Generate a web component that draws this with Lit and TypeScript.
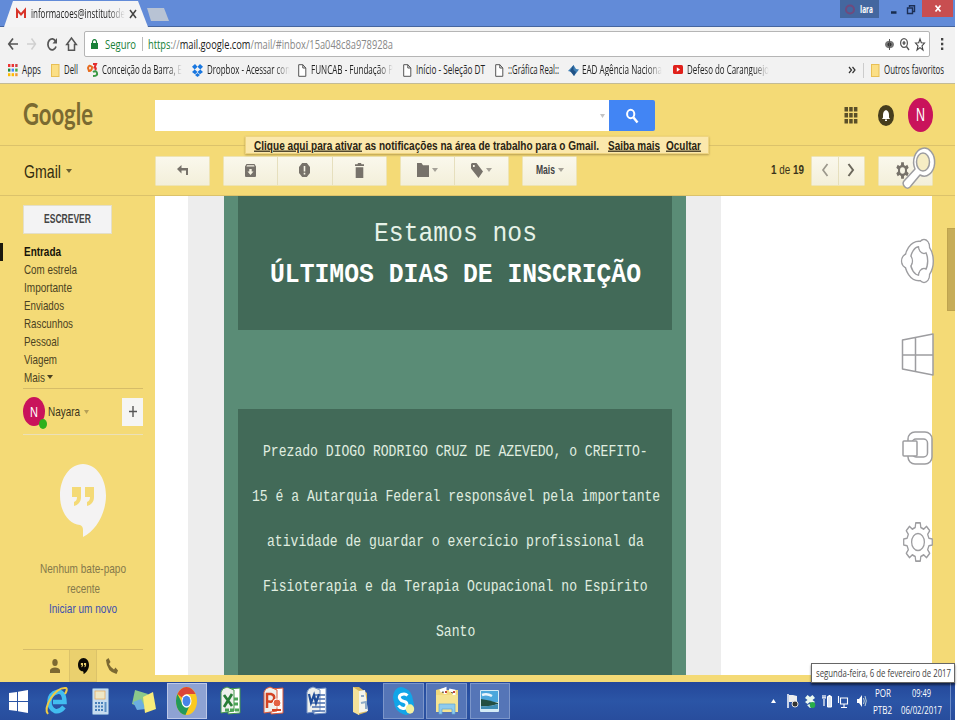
import { LitElement, html, svg, css } from "lit";
import { customElement } from "lit/decorators.js";

// Text condensed to a fixed width, cap-height centred in its box.
const t = (text: unknown, w: number, size: number, cls = "") => html`<svg class="t ${cls}" width=${w} height=${size} font-size=${size}><text x="0" y=${size * 0.86} textLength=${w} lengthAdjust="spacingAndGlyphs">${text}</text></svg>`;
const ic = (w: number, h: number, body: unknown, vb = `0 0 ${w} ${h}`, cls = "") => html`<svg class="ic ${cls}" width=${w} height=${h} viewBox=${vb} preserveAspectRatio="none">${body}</svg>`;

const caret = (c: string, w = 6) => ic(w, 4, svg`<path d="M0 0H10L5 6Z" fill=${c}/>`, "0 0 10 6");
const folder = svg`<rect x=".5" y=".5" width="7.5" height="12" fill="#fbdf86" stroke="#e8bf55"/>`;
const page = svg`<path d="M.7 .7H4.8L7.8 4V12.3H.7ZM4.8 .7V4H7.8" fill="#fff" stroke="#555"/>`;
const bubble = svg`<path fill-rule="evenodd" d="M23 0C10 0 0 14 0 31.500C0 48 9 60 20 61Q23 62 23 66V73C37 66 46 48 46 31.500C46 14 36 0 23 0ZM12 23H21V33C21 38 18 41 14 42V38C16 37 17 36 17 33H12ZM25 23H34V33C34 38 31 41 27 42V38C29 37 30 36 30 33H25Z"/>`;
const gearPath = (n: number, R: number, r: number) => {
  const p: string[] = [];
  for (let i = 0; i < n; i++) {
    [[-0.32, r], [-0.2, R], [0.2, R], [0.32, r]].forEach(([o, q]) => {
      const a = ((i + o) * 2 * Math.PI) / n - Math.PI / 2;
      p.push(`${(Math.cos(a) * q).toFixed(2)} ${(Math.sin(a) * q).toFixed(2)}`);
    });
  }
  return "M" + p.join("L") + "Z";
};

@customElement("app-root")
export class AppRoot extends LitElement {
  static styles = css`
    :host { display: block; width: 960px; height: 720px; background: #fff; overflow: hidden; font-family: "Liberation Sans", Arial, sans-serif; }
    * { box-sizing: border-box; }
    svg { display: block; flex: none; overflow: visible; }
    .desk { width: 955px; height: 720px; position: relative; display: flex; flex-direction: column; }
    .ui { font-family: "Open Sans", "Noto Sans", sans-serif; fill: #222; }
    .row { display: flex; align-items: center; }
    .c { display: flex; align-items: center; justify-content: center; }
    .b { font-weight: 700; }
    .tabs { height: 27px; flex: none; background: #628bd8; border-bottom: 1px solid #45659f; display: grid; grid-template-columns: 144px 692px 39px 43px 31px; align-items: start; padding-left: 4px; }
    .tab { height: 27px; background: #f4f4f5; clip-path: polygon(0 100%, 9px 1px, 134px 1px, 144px 100%); padding-left: 12px; gap: 5px; }
    .new { width: 22px; height: 13px; margin: 8px 0 0 -1px; background: #b8c3d4; clip-path: polygon(0 0, 17px 0, 22px 13px, 4px 13px); }
    .user { height: 18px; background: #44679f; gap: 5px; padding-left: 5px; }
    .user .ui, .x .ui { fill: #fff; }
    .wc { height: 18px; gap: 10px; padding-left: 11px; }
    .x { height: 17px; background: #c84e50; }
    .tools { height: 30px; flex: none; background: #f2f2f2; display: grid; grid-template-columns: 19px 20px 19px 18px 846px 1fr; padding-left: 8px; padding-top: 4px; align-items: center; }
    .omni { height: 26px; background: #fff; border: 1px solid #b5b5b5; border-radius: 2px; padding-left: 6px; padding-right: 4px; }
    .omni .sec { margin-left: 7px; }
    .omni .url { margin-left: 5px; }
    .bar { width: 1px; height: 14px; background: #bbb; margin-left: 6px; }
    .sp { flex: 1; }
    .g { gap: 6px; }
    .green { fill: #188038; }
    .bm { height: 27px; flex: none; background: #f2f2f2; border-bottom: 1px solid #c3bb96; display: grid; grid-template-columns: 43px 36px 105px 106px 105px 92px 73px 105px 176px 14px 8px 1fr; padding-left: 8px; align-items: center; }
    .bm .row { gap: 4px; }
    .fade { -webkit-mask-image: linear-gradient(90deg, #000 82%, transparent); mask-image: linear-gradient(90deg, #000 82%, transparent); }
    .gm { height: 598px; flex: none; background: #f4da76; }
    .head { height: 62px; display: grid; grid-template-columns: 155px 454px 46px 189px 34px 30px 1fr; align-items: start; border-bottom: 1px solid #dbc26b; }
    .logo { padding-left: 23px; padding-top: 14px; }
    .logo .t { font-family: "Lato", sans-serif; font-weight: 700; fill: #7a6a31; }
    .search { height: 31px; margin-top: 16px; background: #fff; padding-right: 4px; justify-content: flex-end; }
    .sb { height: 31px; margin-top: 16px; background: #4285f4; border-radius: 0 2px 2px 0; }
    .h { height: 31px; margin-top: 16px; }
    .av { border-radius: 50%; background: #c9135b; fill: #fff; }
    .big { width: 25px; height: 34px; margin: 14px 0 0 0; }
    .bell { width: 16px; height: 21px; border-radius: 50%; background: #463d1d; }
    .tb { height: 50px; display: flex; align-items: flex-start; padding-top: 10px; border-bottom: 1px solid #dbc26b; }
    .gml { width: 155px; height: 30px; padding-left: 24px; gap: 5px; fill: #332c10; }
    .btns { height: 30px; display: flex; background: linear-gradient(#faf8ec, #f3efda); border: 1px solid #eee4b4; border-radius: 1px; margin-right: 13px; }
    .btns > div { flex: 1; gap: 3px; padding-bottom: 2px; }
    .btns > div + div { border-left: 1px solid #e6dfbd; }
    .btns .b { fill: #444; }
    .w1 { width: 55px; } .w3 { width: 164px; } .w2 { width: 109px; } .wn { width: 54px; }
    .cnt { width: 221px; height: 27px; justify-content: flex-end; padding-right: 7px; fill: #3b341b; }
    .main { height: 486px; display: flex; }
    .side { width: 155px; height: 486px; padding-left: 23px; fill: #4b4222; display: flex; flex-direction: column; }
    .write { width: 89px; height: 29px; margin-top: 9px; background: #f3f3f4; border: 1px solid #e4dfc9; fill: #444; flex: none; padding-bottom: 2px; }
    .labels { margin-top: 9px; padding-left: 1px; flex: none; height: 145px; }
    .labels .row { height: 17.9px; gap: 2px; }
    .sel { margin-left: -24px; padding-left: 21px; border-left: 3px solid #1b180d; fill: #17140a; }
    .hr { width: 120px; border-top: 1px solid #d6bc68; flex: none; }
    .me { width: 120px; height: 45px; flex: none; }
    .me .t { margin-left: 3px; fill: #3b341b; } .me .ic { margin-left: 4px; }
    .sm { width: 22px; height: 29px; position: relative; }
    .me .sm .t { margin: 0; fill: #fff; }
    .dot { position: absolute; right: -2px; bottom: -3px; width: 8px; height: 10px; border-radius: 50%; background: #2fb01d; }
    .plus { width: 21px; height: 28px; margin-left: auto; background: #f5f5f3; fill: #555; }
    .me .plus .ic { margin: 0; }
    .hr.lt { border-color: #ebe0b8; }
    .chat { width: 120px; margin-top: 29px; height: 185px; display: flex; flex-direction: column; align-items: center; fill: #85794b; flex: none; }
    .chat .ic { fill: #f4f3f3; margin-bottom: 25px; }
    .chat .t { margin-bottom: 7px; }
    .chat .lk { fill: #3c50b0; }
    .foot { display: grid; grid-template-columns: 46px 28px 46px; width: 120px; height: 32px; fill: #7c6932; }
    .foot > :nth-child(1) { padding-left: 18px; } .foot > :nth-child(3) { padding-right: 16px; }
    .foot > :nth-child(2) { background: #ead06e; border: 1px solid #dcc36a; border-top: 0; fill: #0a0904; }
    .mail { width: 777px; height: 478.500px; background: #fff; display: flex; padding-left: 33px; }
    .gray { width: 533px; background: #ededed; padding: 0 35px 0 36px; }
    .lt-g { height: 100%; background: #5a8c76; padding: 0 14px 0 13.500px; }
    .dk { background: #426a58; fill: #fff; font-family: "Liberation Mono", monospace; display: flex; flex-direction: column; align-items: center; padding-left: 2px; }
    .d1 { height: 134px; padding-top: 20px; gap: 12.500px; }
    .thin { fill: #e6f2e8; }
    .d2 { height: 266px; margin-top: 79px; padding-top: 33px; gap: 28.400px; fill: #e0eee0; }
    .notice { position: absolute; left: 245px; top: 136px; width: 464px; height: 18px; background: #fbe8ac; border: 1px solid #eed480; box-shadow: 0 1px 2px #b59c50; padding-left: 8px; fill: #2a2413; }
    .notice .t:nth-child(2) { margin-left: 3px; } .notice .t:nth-child(3) { margin-left: 9px; } .notice .t:nth-child(4) { margin-left: 6px; }
    .u { text-decoration: underline; }
    .thumb { position: absolute; right: 0; top: 228px; width: 8px; height: 83px; background: #c7ad58; border: 1px solid #bea34e; border-right: 0; }
    .charms { position: absolute; left: 901px; top: 147px; width: 33px; display: flex; flex-direction: column; align-items: center; }
    .charms > :nth-child(2), .charms > :nth-child(3) { margin-top: 50px; }
    .charms > :nth-child(4) { margin-top: 55px; } .charms > :nth-child(5) { margin-top: 57px; }
    .tip { position: absolute; left: 811px; top: 663px; width: 144px; height: 20px; background: #fff; border: 1px solid #666; box-shadow: 0 2px 2px #0008; }
    .tip .ui { fill: #444; }
    .task { height: 38px; flex: none; background: linear-gradient(#24479a, #2b55a6 50%, #284d9d); display: flex; align-items: flex-start; }
    .start { width: 36.700px; height: 38px; }
    .cell { width: 40.500px; height: 36px; margin: 1px 2.800px 0 0; border: 1px solid transparent; }
    .run { background: #5575b7; border-color: #7c96ca; }
    .act { background: #8ea2d3; border-color: #bdc8e8; }
    .tray { margin-left: auto; width: 194px; height: 38px; display: grid; grid-template-columns: 13px 17px 17px 17px 16px 21px 21px 57px 1fr; align-items: center; padding-left: 10px; }
    .tray .ui { fill: #fff; }
    .st { display: flex; flex-direction: column; gap: 5px; align-items: center; }
    .show { height: 38px; width: 1px; background: #6d8cc8; }
  `;

  bookmark(icon: unknown, w: number, h: number, text: string, tw: number, fade = false, vb?: string) {
    return html`<div class="row">${ic(w, h, icon, vb)}${t(text, tw, 11.8, "ui" + (fade ? " fade" : ""))}</div>`;
  }

  chrome() {
    const grid = svg`${["#e33", "#e33", "#c44", "#284", "#48f", "#4a4", "#fb0", "#fb0", "#e93"].map((c, i) => svg`<rect x=${(i % 3) * 3.6} y=${Math.floor(i / 3) * 4.6} width="2.4" height="3" fill=${c}/>`)}`;
    return html`
      <div class="tabs">
        <div class="tab row">${ic(10, 9, svg`<path d="M1 9V1L5 5.500L9 1V9" fill="none" stroke="#d8352b" stroke-width="2"/>`)}${t("informacoes@institutode", 94, 11.8, "ui fade")}${ic(6, 8, svg`<path d="M0 0L6 8M6 0L0 8" stroke="#444" stroke-width="1.500"/>`)}</div>
        <div class="new"></div>
        <div class="user row">${ic(10, 11, svg`<circle cx="5" cy="5.500" r="4" fill="none" stroke="#704a7d" stroke-width="2"/>`)}${t("Iara", 13, 11, "ui b")}</div>
        <div class="wc row">${ic(7, 12, svg`<path d="M1 9.500H6.500" stroke="#182c4e" stroke-width="2.500"/>`)}${ic(8, 9, svg`<path d="M2.500 2V.7H7.500V6.500H6M.5 3H5.500V8.500H.5Z" fill="none" stroke="#1c2f55" stroke-width="1.400"/>`)}</div>
        <div class="x c">${ic(6, 7, svg`<path d="M.5 .5L5.500 6.500M5.500 .5L.5 6.500" stroke="#fff" stroke-width="1.700"/>`)}</div>
      </div>
      <div class="tools">
        ${ic(10, 12, svg`<path d="M10 6H1M5 .5L.8 6L5 11.500" fill="none" stroke="#555" stroke-width="1.700"/>`)}
        ${ic(9, 12, svg`<path d="M0 6H8M4.500 .5L8.500 6L4.500 11.500" fill="none" stroke="#d0d0d0" stroke-width="1.500"/>`)}
        ${ic(10, 13, svg`<path d="M8.700 3.500A4.200 5.500 0 1 0 9 8.500" fill="none" stroke="#555" stroke-width="1.700"/><path d="M10 0V5.500H5.500Z" fill="#555"/>`)}
        ${ic(11, 14, svg`<path d="M5.500 1L.7 7.500H2.500V13.200H8.500V7.500H10.300Z" fill="none" stroke="#555" stroke-width="1.500"/>`)}
        <div class="omni row">
          ${ic(7, 10, svg`<path d="M0 4H7V10H0Z" fill="#188038"/><path d="M1.500 4.500V3Q1.500 .7 3.500 .7T5.500 3V4.500" fill="none" stroke="#188038" stroke-width="1.200"/>`)}
          ${t("Seguro", 31, 13, "ui green sec")}<div class="bar"></div>
          ${t(svg`<tspan fill="#188038">https</tspan><tspan fill="#888">://</tspan><tspan fill="#222">mail.google.com</tspan><tspan fill="#888">/mail/#inbox/15a048c8a978928a</tspan>`, 245, 13, "ui url")}
          <div class="sp"></div>
          <div class="row g">
            ${ic(9, 11, svg`<ellipse cx="4.500" cy="5.500" rx="4.500" ry="3.800" fill="#777"/><circle cx="4.500" cy="5.500" r="2" fill="#333"/><path d="M4.500 0V11" stroke="#555"/>`)}
            ${ic(9, 12, svg`<ellipse cx="4" cy="5" rx="3.400" ry="4.400" fill="none" stroke="#555" stroke-width="1.200"/><path d="M2.500 5H5.500M4 3V7M6.500 8.500L9 12" stroke="#555" stroke-width="1.300"/>`)}
            ${ic(10, 13, svg`<path d="M5 1L6.300 4.800L9.500 5L7 7.800L8 12L5 9.600L2 12L3 7.800L.5 5L3.700 4.800Z" fill="none" stroke="#444" stroke-width="1.100"/>`)}
          </div>
        </div>
        <div class="c">${ic(3, 12, svg`<path d="M0 0H2.300V2.500H0ZM0 4.700H2.300V7.200H0ZM0 9.500H2.300V12H0Z" fill="#444"/>`)}</div>
      </div>
      <div class="bm">
        ${this.bookmark(grid, 10, 12, "Apps", 19, false)}
        ${this.bookmark(folder, 9, 13, "Dell", 14)}
        ${this.bookmark(svg`<path d="M1 5Q2 1 5 4Q5 8 2 8Z" fill="none" stroke="#e66b1e" stroke-width="2"/><path d="M6 1H9L7.500 4.500Q10 5 8 7" fill="none" stroke="#e32c2c" stroke-width="2"/><path d="M6 9Q9 7 10 10T6 13" fill="none" stroke="#3a9a45" stroke-width="2"/>`, 11, 14, "Conceição da Barra, E", 80, true)}
        ${this.bookmark(svg`<path d="M3 0L5.500 2.700L2.700 5.400L0 2.800ZM8 0L11 2.800L8.300 5.400L5.500 2.700ZM0 8L2.700 5.400L5.500 8L3 10.200ZM11 8L8.300 5.400L5.500 8L8 10.200ZM3 11L5.500 9L8 11L5.500 13Z" fill="#1977e0"/>`, 11, 13, "Dropbox - Acessar con", 83, true)}
        ${this.bookmark(page, 9, 13, "FUNCAB - Fundação P", 82, true)}
        ${this.bookmark(page, 9, 13, "Início - Seleção DT", 69)}
        ${this.bookmark(page, 9, 13, "::Gráfica Real::", 51)}
        ${this.bookmark(svg`<path d="M0 7L5.500 1L8 5L11 5.500L6 12L4 8Z" fill="#3e7fb5"/><path d="M5.500 1V6L8 8L6 12L2 7Z" fill="#205286"/>`, 10, 12, "EAD Agência Naciona", 80, true)}
        ${this.bookmark(svg`<rect y="1" width="10" height="9" rx="1.500" fill="#e0201b"/><path d="M3.800 3.200V7.800L7 5.500Z" fill="#fff"/>`, 10, 11, "Defeso do Caranguejo", 82, true)}
        ${ic(6, 6, svg`<path d="M0 0L2.500 3L0 6M3.500 0L6 3L3.500 6" fill="none" stroke="#333" stroke-width="1.200"/>`)}
        ${ic(1, 15, svg`<path d="M.5 0V15" stroke="#ccc"/>`)}
        ${this.bookmark(folder, 9, 13, "Outros favoritos", 60)}
      </div>`;
  }

  side() {
    const L: [string, number][] = [["Com estrela", 53], ["Importante", 48], ["Enviados", 40], ["Rascunhos", 49], ["Pessoal", 35], ["Viagem", 33]];
    return html`<div class="side">
      <div class="write c">${t("ESCREVER", 47, 12, "b")}</div>
      <div class="labels">
        <div class="row sel">${t("Entrada", 37, 13, "b")}</div>
        ${L.map(([s, w]) => html`<div class="row">${t(s, w, 13)}</div>`)}
        <div class="row">${t("Mais", 21, 13)}${caret("#4b4222", 6)}</div>
      </div>
      <div class="hr"></div>
      <div class="me row"><div class="sm av c">${t("N", 8, 15)}<div class="dot"></div></div>${t("Nayara", 32, 13)}${caret("#b59f58", 5)}
        <div class="plus c">${ic(8, 11, svg`<path d="M0 5.500H8M4 0V11" stroke="#555" stroke-width="1.400"/>`)}</div></div>
      <div class="hr lt"></div>
      <div class="chat">${ic(46, 73, bubble)}<div>${t("Nenhum bate-papo", 86, 13)}</div>${t("recente", 33, 13)}${t("Iniciar um novo", 68, 13, "lk")}</div>
      <div class="hr"></div>
      <div class="foot"><div class="c">${ic(10, 14, svg`<ellipse cx="5" cy="3.500" rx="2.700" ry="3.500"/><path d="M0 14V11Q1 8.500 5 8.500T10 11V14Z"/>`)}</div>
        <div class="c">${ic(11, 16, bubble, "0 0 46 73")}</div>
        <div class="c">${ic(12, 16, svg`<path d="M0 2L2.500 0L4.500 4L3 6Q5 10 8 11.500L9.500 9.500L12 12.500L10.500 16Q1 14 0 2Z"/>`)}</div></div>
    </div>`;
  }

  gmail() {
    const G = "#77726a";
    const mono = (s: string) => t(s, s.length * 7.85, 16.5);
    return html`<div class="gm">
      <div class="head">
        <div class="logo">${t("Google", 70, 31)}</div>
        <div class="search row">${caret("#c4c4c4", 5)}</div>
        <div class="sb c">${ic(12, 14, svg`<ellipse cx="4.700" cy="5" rx="3.600" ry="4.200" fill="none" stroke="#fff" stroke-width="2"/><path d="M7.500 8.500L11.500 13.500" stroke="#fff" stroke-width="2.400"/>`)}</div>
        <div></div>
        <div class="h row">${ic(14, 17, svg`${[0, 1, 2, 3, 4, 5, 6, 7, 8].map((i) => svg`<rect x=${(i % 3) * 4.7 + 0.5} y=${Math.floor(i / 3) * 6} width="3.500" height="4.500" fill="#5a4f28"/>`)}`)}</div>
        <div class="h row"><div class="bell c">${ic(8, 11, svg`<path d="M4 0Q7 1 7 5V7.500L8 9H0L1 7.500V5Q1 1 4 0ZM3 9.500H5V11H3Z" fill="#fff"/>`)}</div></div>
        <div class="big av c">${t("N", 9, 18)}</div>
      </div>
      <div class="tb">
        <div class="gml row">${t("Gmail", 37, 19)}${caret("#6a5e31", 6)}</div>
        <div class="btns w1"><div class="c">${ic(11, 10, svg`<path d="M0 4L4.500 0V3H11V10H9V5.500H4.500V8.500Z" fill=${G}/>`)}</div></div>
        <div class="btns w3">
          <div class="c">${ic(11, 13, svg`<path fill-rule="evenodd" d="M1.500 0H9.500L11 2.500V12Q11 13 10 13H1Q0 13 0 12V2.500ZM1.500 2.500H9.500L9 1.300H2ZM4.300 5V7.500H2.500L5.500 11L8.500 7.500H6.700V5Z" fill=${G}/>`)}</div>
          <div class="c">${ic(11, 14, svg`<path d="M3.200 0H7.800L11 4V10L7.800 14H3.200L0 10V4Z" fill=${G}/><path d="M5.500 3V8.500M5.500 9.800V11.500" stroke="#f7f5e6" stroke-width="1.600"/>`)}</div>
          <div class="c">${ic(9, 15, svg`<path d="M0 1.200H2.500L3 0H6L6.500 1.200H9V3H0ZM.7 4.200H8.300V15H.7Z" fill=${G}/>`)}</div>
        </div>
        <div class="btns w2">
          <div class="c">${ic(12, 14, svg`<path d="M0 0H4.500L6 2.200H12V14H0Z" fill=${G}/>`)}${caret("#a5a197", 6)}</div>
          <div class="c">${ic(12, 15, svg`<path fill-rule="evenodd" d="M0 1L1 0H5.500L12 8.500L7.500 15L0 5.500ZM2 2V4H3.700V2Z" fill=${G}/>`)}${caret("#a5a197", 6)}</div>
        </div>
        <div class="btns w1"><div class="c">${t("Mais", 19, 12, "b")}${caret("#a5a197", 6)}</div></div>
        <div class="cnt row">${t(svg`<tspan font-weight="700">1</tspan> de <tspan font-weight="700">19</tspan>`, 33, 12.5)}</div>
        <div class="btns wn"><div class="c">${ic(6, 12, svg`<path d="M5.500 0L1 6L5.500 12" fill="none" stroke="#9c988c" stroke-width="1.700"/>`)}</div><div class="c">${ic(6, 12, svg`<path d="M.5 0L5 6L.5 12" fill="none" stroke="#6c685c" stroke-width="2"/>`)}</div></div>
        <div class="btns w1"><div class="c">${ic(13, 17, svg`<path d=${gearPath(6, 10, 7)} fill=${G}/><circle r="3.800" fill="#f7f5e6"/>`, "-10 -10 20 20")}${ic(4, 4, svg``)}</div></div>
      </div>
      <div class="main">${this.side()}
        <div class="mail"><div class="gray"><div class="lt-g">
          <div class="dk d1">${t("Estamos nos", 163, 28.5, "thin")}${t("ÚLTIMOS DIAS DE INSCRIÇÃO", 371, 28.5, "b")}</div>
          <div class="dk d2">${["Prezado DIOGO RODRIGO CRUZ DE AZEVEDO, o CREFITO-", "15 é a Autarquia Federal responsável pela importante", "atividade de guardar o exercício profissional da", "Fisioterapia e da Terapia Ocupacional no Espírito", "Santo"].map(mono)}</div>
        </div></div></div>
      </div>
    </div>`;
  }

  overlays() {
    const s = (d: string) => svg`<path d=${d} fill="#fff" stroke="#9d9da0" stroke-width="1.500" stroke-linejoin="round"/>`;
    return html`
      <div class="notice row">${t("Clique aqui para ativar", 108, 12.3, "b u")}${t("as notificações na área de trabalho para o Gmail.", 234, 12.3, "b")}${t("Saiba mais", 52, 12.3, "b u")}${t("Ocultar", 35, 12.3, "b u")}</div>
      <div class="thumb"></div>
      <div class="charms">
        ${ic(32, 42, svg`${s("M13 22A10.500 14 0 1 1 18 28L8 40Q5 42.500 2.500 39.500T2 34Z")}<ellipse cx="21" cy="15" rx="6.500" ry="9" fill="#f6edc4" stroke="#9d9da0" stroke-width="1.500"/>`)}
        ${ic(33, 44, svg`<ellipse cx="18" cy="22" rx="11.500" ry="17" fill="none" stroke="#9d9da0" stroke-width="7"/>${[[6, 22], [23, 7.5], [23, 36.5]].map(([x, y]) => svg`<ellipse cx=${x} cy=${y} rx="5.400" ry="6.900" fill="#fff" stroke="#9d9da0" stroke-width="1.500"/>`)}<ellipse cx="18" cy="22" rx="11.500" ry="17" fill="none" stroke="#fff" stroke-width="4.200"/>${[[6, 22], [23, 7.5], [23, 36.5]].map(([x, y]) => svg`<ellipse cx=${x} cy=${y} rx="4.600" ry="6.100" fill="#fff"/>`)}`)}
        ${ic(33, 43, s("M1.500 7L32 1V42L1.500 36ZM1.500 22H32M14.500 4.500V38.500"))}
        ${ic(31, 34, svg`<rect x="6" y="1" width="24" height="32" rx="7" fill="#fff" stroke="#9d9da0" stroke-width="1.500"/><rect x="10" y="8" width="15.500" height="18" rx="4" fill="#fff" stroke="#9d9da0" stroke-width="1.500"/><rect x="1" y="10" width="14" height="15" rx="1" fill="#fff" stroke="#9d9da0" stroke-width="1.500"/>`)}
        ${ic(30, 40, svg`<path d=${gearPath(8, 19.3, 15)} fill="#fff" stroke="#9d9da0" stroke-width="1.700" stroke-linejoin="round"/><circle r="8.500" fill="#fff" stroke="#9d9da0" stroke-width="1.700"/>`, "-20 -20 40 40")}
      </div>
      <div class="tip c">${t("segunda-feira, 6 de fevereiro de 2017", 135, 11.5, "ui")}</div>`;
  }

  taskbar() {
    const office = (c: string, mark: unknown) => svg`<path d="M8 2L20 1L20 26L8 27Z" fill="#fff" stroke=${c}/><path d="M1 5Q2 1 7 0L14 3V24L1 26Z" fill="#eef0ec" stroke=${c}/>${mark}`;
    const cell = (i: unknown, k = "") => html`<div class="cell c ${k}">${i}</div>`;
    return html`<div class="task">
      <div class="start c">${ic(19, 23, svg`<path d="M0 3L8 2V11H0ZM9 1.700L19 0V11H9ZM0 12H8V21L0 20ZM9 12H19V23L9 21.300Z" fill="#fff"/>`)}</div>
      ${cell(ic(21, 28, svg`<path d="M18 20Q14 25 9 24Q3 21 3.500 14T11 5T18.500 15H7" fill="none" stroke="#42bdf0" stroke-width="4.500"/><path d="M2 27Q-2 22 5 11T20 1Q22 2 19 7" fill="none" stroke="#f0cb45" stroke-width="2"/>`))}
      ${cell(ic(17, 27, svg`<rect x=".5" y=".5" width="16" height="26" rx="1" fill="#c6dcef" stroke="#7aa0cc"/><rect x="3" y="3" width="10" height="8" fill="#eee7c7" stroke="#e3a75a" stroke-width=".7"/><path d="M3 15H11M3 18.500H11M3 22H11" stroke="#477fb9" stroke-width="2" stroke-dasharray="2 1"/><path d="M13.500 14V24" stroke="#5c91c5" stroke-width="2"/>`))}
      ${cell(ic(24, 25, svg`<path d="M3 1L16 5L11 19L0 15Z" fill="#8bc98b"/><path d="M1 13L9 10L14 20L5 21Z" fill="#6baee0"/><path d="M11 8L21 3L24 20L13 24Z" fill="#f8ec7a"/>`))}
      ${cell(ic(21, 28, svg`<circle cx="20" cy="20" r="20" fill="#fbc91f"/><path d="M20 20L2.700 10A20 20 0 0 1 37.300 10H20Z" fill="#dc4637"/><path d="M2.700 10A20 20 0 0 0 18 40L26 26L14 26Z" fill="#23995a"/><circle cx="20" cy="20" r="9.500" fill="#fff"/><circle cx="20" cy="20" r="7.500" fill="#4784e8"/>`, "0 0 40 40"), "act")}
      ${cell(ic(21, 28, office("#43984b", svg`<path d="M4 8L12 19M12 7L4 20" stroke="#277d36" stroke-width="2.700"/><path d="M14 12H19M14 17H19M5 23H19" stroke="#4ca557" stroke-width="3" stroke-dasharray="4 1"/>`)))}
      ${cell(ic(21, 28, office("#dd5939", svg`<path d="M4 21V7H8Q12 8 11 12T4 14" fill="none" stroke="#d34323" stroke-width="2.500"/><circle cx="14" cy="16" r="4" fill="#e36243" stroke="#fff"/><path d="M9 23H18" stroke="#d34323" stroke-width="2"/>`)))}
      ${cell(ic(21, 28, office("#7794c4", svg`<path d="M9 8H19M10 12H19M6 16H19M6 20H19M6 24H19" stroke="#4a6fae" stroke-width="1.700"/><path d="M3 7L5 16L8 8L10 16L13 7" fill="none" stroke="#204d98" stroke-width="2.200"/>`)))}
      ${cell(ic(17, 28, svg`<path d="M1 0H7L15 6V25L6 28Z" fill="#d7b65c"/><path d="M7 4L13 3L16 24L7 26Z" fill="#f4f4ec"/><path d="M9 9H12M9 16L14 15V22" stroke="#8eabc8" stroke-width="2" fill="none"/><path d="M1 0L7 4V28L1 25Z" fill="#f5e19a"/>`))}
      ${cell(ic(21, 28, svg`<ellipse cx="8" cy="10" rx="8" ry="10" fill="#12a5e8"/><ellipse cx="13" cy="18" rx="8" ry="10" fill="#12a5e8"/><ellipse cx="10.500" cy="14" rx="9.500" ry="12.500" fill="#12a5e8"/><path d="M14.500 8.500Q12 6 8.500 7.500T7 12Q8 14 11 14.500T14 18Q13 22 10 21.500T5.500 18.500" fill="none" stroke="#fff" stroke-width="3"/><ellipse cx="17" cy="22" rx="4.200" ry="4.700" fill="#f4f1a0"/>`), "run")}
      ${cell(ic(22, 28, svg`<path d="M0 3L8 1L10 3H22V25H0Z" fill="#f1d97c"/><path d="M4 4L9 2V7M13 3L18 4V8" stroke="#fff" stroke-width="3"/><path d="M9 5H11M17 5H19" stroke="#c6453b" stroke-width="2"/><path d="M0 8H22V25H0Z" fill="#f5e391"/><path d="M3 27V17H19V27H16V22H6V27Z" fill="#8fcbed" stroke="#5da4d6" stroke-width=".7"/>`), "run")}
      ${cell(ic(19, 22, svg`<rect width="19" height="22" rx="1" fill="#d4ecf7"/><path d="M1 1H18V12H1Z" fill="#4ba7dc"/><path d="M2 5Q7 3 12 6" stroke="#e8f5fc" stroke-width="2.500" fill="none"/><path d="M1 9Q9 10 18 13V14Q9 17 1 16Z" fill="#224f42"/><path d="M1 16Q9 17 18 14V19H1Z" fill="#3e8db4"/>`), "run")}
      <div class="tray">
        ${ic(5, 4, svg`<path d="M0 4L2.500 0L5 4Z" fill="#fff"/>`)}
        <div class="c">${ic(11, 14, svg`<path d="M1 0V14" stroke="#fff" stroke-width="1.500"/><path d="M2 1H6L10 2V8H2Z" fill="#eee"/><circle cx="8" cy="10" r="3" fill="#333" stroke="#ddd"/>`)}</div>
        <div class="c">${ic(10, 13, svg`<path d="M2.500 0L5 2L7.500 0L10 3L7.500 5L10 7L7.500 9L5 7L2.500 9L0 7L2.500 5L0 3ZM2 10L5 9L8 11L5 13Z" fill="#eafaf0"/><ellipse cx="7.500" cy="10" rx="2.800" ry="3" fill="#28ae4a"/>`)}</div>
        <div class="c">${ic(10, 14, svg`<path d="M0 4H4M1 1V4M3 1V4M2 5V12" stroke="#fff" stroke-width="1.200"/><path d="M5.500 2.500H9.500V13H5.500ZM6.500 1.500H8.500" fill="#dce5f4" stroke="#fff"/>`)}</div>
        <div class="c">${ic(10, 13, svg`<path d="M2.500 3H9.500V9H2.500ZM6 9V12M3 12.500H9M.5 1V8" fill="none" stroke="#fff" stroke-width="1.100"/>`)}</div>
        <div class="c">${ic(9, 12, svg`<path d="M0 4H2L5 0V12L2 8H0Z" fill="#fff"/><path d="M6.500 3Q8 6 6.500 9M8 1Q10.500 6 8 11" fill="none" stroke="#cdd" stroke-width=".9"/>`)}</div>
        <div class="st">${t("POR", 16, 11.5, "ui")}${t("PTB2", 19, 11.5, "ui")}</div>
        <div class="st">${t("09:49", 19, 11.5, "ui")}${t("06/02/2017", 41, 11.5, "ui")}</div>
        <div><div class="show"></div></div>
      </div>
    </div>`;
  }

  render() {
    return html`<div class="desk">${this.chrome()}${this.gmail()}${this.taskbar()}${this.overlays()}</div>`;
  }
}
